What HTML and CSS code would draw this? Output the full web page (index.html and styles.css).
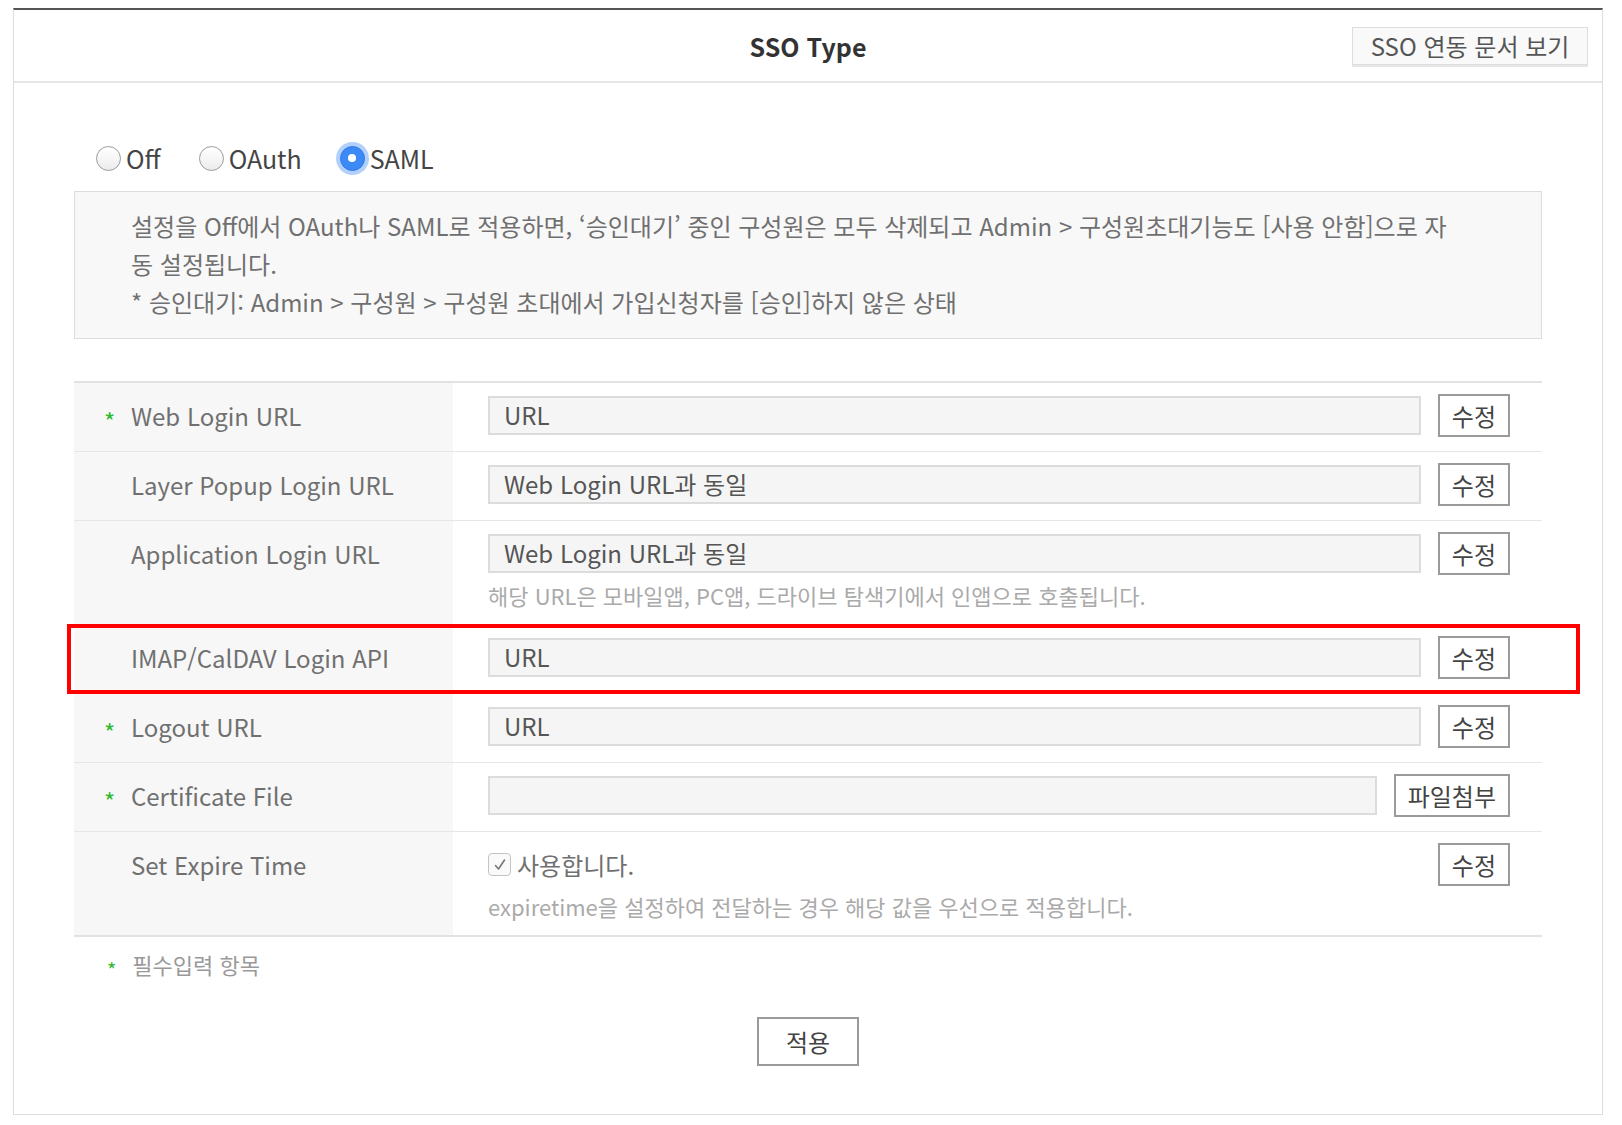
FILE: index.html
```html
<!DOCTYPE html>
<html lang="ko">
<head>
    <meta charset="UTF-8">
    <meta name="viewport" content="width=device-width, initial-scale=1.0">
    <title>SSO Type</title>
    <link rel="stylesheet" href="styles.css">
</head>
<body>
    <div class="sso-panel">
        <div class="panel-head">
            <h2>SSO Type</h2>
            <button class="doc-btn">SSO 연동 문서 보기</button>
        </div>

        <div class="panel-body">
            <div class="sso-types">
                <label class="radio"><span class="radio-mark"></span>Off</label>
                <label class="radio"><span class="radio-mark"></span>OAuth</label>
                <label class="radio is-checked"><span class="radio-mark"></span>SAML</label>
            </div>

            <div class="notice">
                <p>설정을 Off에서 OAuth나 SAML로 적용하면, ‘승인대기’ 중인 구성원은 모두 삭제되고 Admin &gt; 구성원초대기능도 [사용 안함]으로 자동 설정됩니다.</p>
                <p>* 승인대기: Admin &gt; 구성원 &gt; 구성원 초대에서 가입신청자를 [승인]하지 않은 상태</p>
            </div>

            <div class="sso-table">
                <div class="sso-row">
                    <div class="row-label"><span class="req">*</span>Web Login URL</div>
                    <div class="row-value">
                        <div class="field-line">
                            <div class="text-input">URL</div>
                            <button class="btn">수정</button>
                        </div>
                    </div>
                </div>
                <div class="sso-row">
                    <div class="row-label">Layer Popup Login URL</div>
                    <div class="row-value">
                        <div class="field-line">
                            <div class="text-input">Web Login URL과 동일</div>
                            <button class="btn">수정</button>
                        </div>
                    </div>
                </div>
                <div class="sso-row">
                    <div class="row-label">Application Login URL</div>
                    <div class="row-value">
                        <div class="field-line">
                            <div class="text-input">Web Login URL과 동일</div>
                            <button class="btn">수정</button>
                        </div>
                        <p class="help">해당 URL은 모바일앱, PC앱, 드라이브 탐색기에서 인앱으로 호출됩니다.</p>
                    </div>
                </div>
                <div class="sso-row is-highlight no-line">
                    <div class="row-label">IMAP/CalDAV Login API</div>
                    <div class="row-value">
                        <div class="field-line">
                            <div class="text-input">URL</div>
                            <button class="btn">수정</button>
                        </div>
                    </div>
                </div>
                <div class="sso-row no-line">
                    <div class="row-label"><span class="req">*</span>Logout URL</div>
                    <div class="row-value">
                        <div class="field-line">
                            <div class="text-input">URL</div>
                            <button class="btn">수정</button>
                        </div>
                    </div>
                </div>
                <div class="sso-row">
                    <div class="row-label"><span class="req">*</span>Certificate File</div>
                    <div class="row-value">
                        <div class="field-line">
                            <div class="text-input"></div>
                            <button class="btn">파일첨부</button>
                        </div>
                    </div>
                </div>
                <div class="sso-row">
                    <div class="row-label">Set Expire Time</div>
                    <div class="row-value">
                        <div class="field-line">
                            <label class="check">
                                <span class="check-box">
                                    <svg width="16" height="16" viewBox="0 0 16 16"><path d="M3.5 8.5l3 3.5 6-9" fill="none" stroke="#777" stroke-width="1.6" stroke-linecap="round" stroke-linejoin="round"/></svg>
                                </span>사용합니다.
                            </label>
                            <button class="btn">수정</button>
                        </div>
                        <p class="help">expiretime을 설정하여 전달하는 경우 해당 값을 우선으로 적용합니다.</p>
                    </div>
                </div>
            </div>

            <p class="required-note"><span class="req">*</span>필수입력 항목</p>

            <div class="actions">
                <button class="btn btn-apply">적용</button>
            </div>
        </div>
    </div>
</body>
</html>
```

FILE: styles.css
```css
body {
    margin: 0;
    font-family: "Noto Sans CJK KR", "Noto Sans", sans-serif;
    color: #333;
    background: #fff;
}
button {
    font-family: inherit;
    cursor: pointer;
}
.sso-panel {
    width: 1590px;
    margin: 8px 0 0 13px;
    box-sizing: border-box;
    border: 1px solid #ddd;
    border-top: 2px solid #555;
}
.panel-head {
    display: grid;
    grid-template-columns: 1fr auto 1fr;
    align-items: center;
    height: 73px;
    box-sizing: border-box;
    padding: 0 14px;
    border-bottom: 2px solid #e6e6e6;
}
.panel-head h2 {
    grid-column: 2;
    margin: 0;
    font-size: 25px;
    font-weight: 700;
    color: #333;
}
.doc-btn {
    grid-column: 3;
    justify-self: end;
    width: 236px;
    height: 38px;
    padding: 0;
    border: 1px solid #ddd;
    background: #f9f9f9;
    box-shadow: 0 2px 0 #e6e6e6;
    font-size: 24px;
    line-height: 34px;
    color: #555;
}
.panel-body {
    padding: 55px 60px 48px;
}

/* sso type radios */
.sso-types {
    display: flex;
    align-items: center;
    gap: 38px;
    height: 40px;
    padding-left: 22px;
    margin-bottom: 13px;
}
.radio {
    display: flex;
    align-items: center;
    gap: 5px;
    font-size: 25px;
    color: #444;
}
.radio-mark {
    display: grid;
    place-items: center;
    width: 25px;
    height: 25px;
    box-sizing: border-box;
    border-radius: 50%;
    border: 1px solid #9c9c9c;
    background: linear-gradient(#fff, #ececec);
}
.radio.is-checked .radio-mark {
    border-color: #2f78e4;
    background: #3c8af6;
    box-shadow: 0 0 0 4px rgba(60, 138, 246, 0.4);
}
.radio.is-checked .radio-mark::after {
    content: "";
    width: 8px;
    height: 8px;
    border-radius: 50%;
    background: #fff;
}

.notice {
    border: 1px solid #ddd;
    background: #f8f8f8;
    padding: 15px 80px 17px 56px;
    font-size: 24px;
    line-height: 38px;
    color: #707070;
}
.notice p {
    margin: 0;
}

/* settings table */
.sso-table {
    margin-top: 42px;
    border-top: 2px solid #e2e2e2;
    border-bottom: 2px solid #e2e2e2;
}
.sso-row {
    position: relative;
    display: grid;
    grid-template-columns: 379px 1fr;
    border-top: 1px solid #e6e6e6;
}
.sso-row:first-child {
    border-top: 0;
}
.sso-row.no-line {
    border-top-color: transparent;
}
.sso-row.is-highlight::after {
    content: "";
    position: absolute;
    top: -1px;
    bottom: -1px;
    left: -7px;
    right: -38px;
    border: 4px solid #f00;
    pointer-events: none;
}
.row-label {
    position: relative;
    padding: 11px 0 14px 57px;
    background: #f7f7f7;
    font-size: 24px;
    line-height: 43px;
    color: #707070;
}
.req {
    color: #2fba2f;
    font-size: 24px;
}
.row-label .req {
    position: absolute;
    left: 30px;
    top: 16px;
}
.row-value {
    padding: 11px 32px 14px 35px;
}
.field-line {
    display: flex;
    align-items: center;
    gap: 17px;
}
.text-input {
    flex: 1;
    height: 39px;
    box-sizing: border-box;
    padding: 0 14px;
    border: 2px solid #dcdcdc;
    background: #f5f5f5;
    font-size: 24px;
    line-height: 34px;
    color: #555;
}
.btn {
    min-width: 72px;
    height: 43px;
    padding: 0 12px;
    border: 2px solid #9a9a9a;
    background: #fff;
    font-size: 24px;
    line-height: 38px;
    color: #444;
}
.help {
    margin: 7px 0 2px;
    font-size: 22px;
    line-height: 26px;
    color: #aaa;
}
.check {
    flex: 1;
    display: flex;
    align-items: center;
    gap: 6px;
    font-size: 24px;
    color: #707070;
}
.check-box {
    display: grid;
    place-items: center;
    width: 23px;
    height: 23px;
    box-sizing: border-box;
    border: 1px solid #c4c4c4;
    border-radius: 4px;
    background: #fafafa;
}

.required-note {
    margin: 14px 0 0;
    padding-left: 33px;
    font-size: 22px;
    line-height: 26px;
    color: #999;
}
.required-note .req {
    display: inline-block;
    margin-right: 16px;
    font-size: 20px;
    transform: translateY(4px);
}
.actions {
    margin-top: 38px;
    text-align: center;
}
.btn-apply {
    width: 102px;
    height: 49px;
}
```
